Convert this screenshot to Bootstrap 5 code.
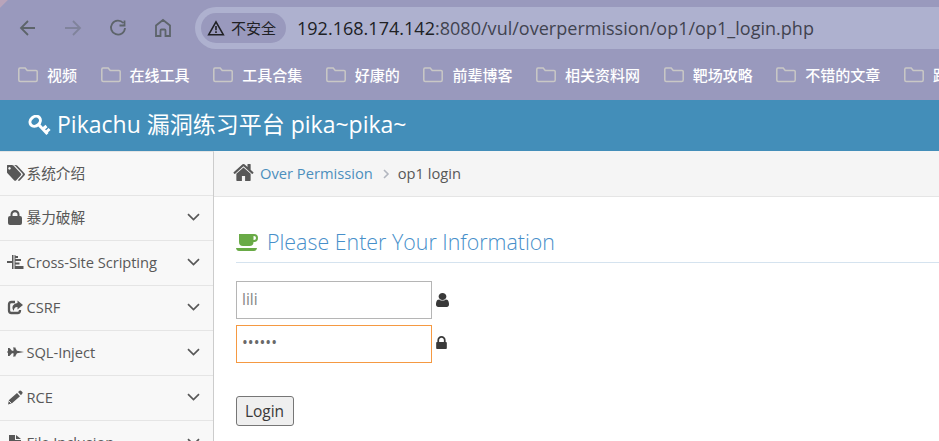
<!DOCTYPE html>
<html lang="zh-CN">
<head>
<meta charset="utf-8">
<title>Pikachu</title>
<link href="https://cdn.jsdelivr.net/npm/bootstrap@5.3.0/dist/css/bootstrap.min.css" rel="stylesheet">
<style>
body{font-family:"Open Sans","Noto Sans CJK SC",sans-serif;font-size:15px;line-height:20px;color:#585858;height:441px;overflow:hidden;background:#fff}
svg{display:block;flex:none;fill:currentColor}
.chrome{height:100px;background:linear-gradient(135deg,#b9a4ba 0,#b9a4ba 5px,#9999bd 6px);color:#fff}
.toolbar{height:56px;padding-left:19px}
.toolbar>svg{fill:none;stroke:#5d646a;stroke-width:1.8;margin-right:27px}
.address{height:42px;border-radius:21px 0 0 21px;background:#aeb1cf;padding-left:6px;margin-left:-4px}
.safety{height:30px;width:85px;border-radius:15px;background:#9999bd;color:#202124;font-family:"Noto Sans CJK SC",sans-serif;padding-left:6px;gap:6px}
.url{color:#41434f;font-family:"Open Sans",sans-serif;font-size:18px;line-height:24px;margin-left:11px;white-space:nowrap;letter-spacing:.02px}
.url b{font-weight:400;color:#202124}
.marks{height:38px;padding:0 0 0 18px;gap:23.6px;white-space:nowrap;font-family:"Noto Sans CJK SC",sans-serif;font-weight:500}
.mark-item{gap:9px;flex:none}
.marks svg{fill:none;stroke:#c9c8c6;stroke-width:1.5}
.titlebar{height:51px;background:#438eb9;color:#fff;font-size:23px;padding-left:28px;line-height:46px}
.titlebar span{margin-left:6px;padding-bottom:3px}
.side{width:214px;background:#f8f8f8;border-right:1px solid #ccc;border-top:1px solid #e5e5e5;font-size:14.7px;letter-spacing:-.06px}
.side-item{height:45px;border-bottom:1px solid #e5e5e5;padding:0 13px 2px 7px;white-space:nowrap;flex:none}
.side-item:first-child{height:44px}
.side-item .pic{width:19.5px;flex:none}
.crumbs{height:46px;background:#f5f5f5;border-bottom:1px solid #e5e5e5;padding:0 0 2px 19px;font-size:14.7px}
.blue{color:#4c8fbd}
.content-pad{padding:31px 0 0 22px}
.heading{height:35px;border-bottom:1px solid #d5e3ef;color:#478fca;font-size:21.4px;font-weight:300;padding-bottom:6px}
.field{width:196px;height:38px;border:1px solid #b5b5b5;border-radius:0;padding:0 5px 2px;color:#858585;font-size:15.5px;outline:0}
.field.hot{border-color:#f59942;color:#696969;padding-bottom:4px}
.login-btn{width:58px;height:30px;border:1px solid #767676;border-radius:3px;background:#efefef;color:#393939;font-size:15.5px;padding:0 1px 0 0;line-height:26px;margin-top:33px}
</style>
<script src="https://cdn.jsdelivr.net/npm/bootstrap@5.3.0/dist/js/bootstrap.bundle.min.js"></script>
</head>
<body>
<svg width="0" height="0" class="position-absolute">
<symbol id="folder" viewBox="0 0 20 16"><path d="M.8 13V2.2Q.8 1 2 1h5.2l2 2.4H18q1.2 0 1.2 1.2V13q0 1.5-1.500 1.500H2.300Q.8 14.500.8 13z"/></symbol>
<symbol id="down" viewBox="0 0 13 8"><path d="M1 1.200l5.500 5.300L12 1.200" fill="none" stroke="currentColor" stroke-width="1.700"/></symbol>
<symbol id="lock" viewBox="320 128 1152 1408"><path d="M640 768h512v-192q0-106-75-181t-181-75-181 75-75 181v192zm832 96v576q0 40-28 68t-68 28h-960q-40 0-68-28t-28-68v-576q0-40 28-68t68-28h32v-192q0-184 132-316t316-132 316 132 132 316v192h32q40 0 68 28t28 68z"/></symbol>
</svg>
<header class="chrome">
  <div class="toolbar d-flex align-items-center">
    <svg width="18" height="18" viewBox="0 0 18 18"><path d="M16 9H2M9 2L2 9l7 7"/></svg>
    <svg width="18" height="18" viewBox="0 0 18 18" opacity=".4"><path d="M1 9h14M9 2l7 7-7 7"/></svg>
    <svg width="18" height="18" viewBox="0 0 18 18"><path d="M14.300 4A7 7 0 1 0 16 9M15.500 1.500v5h-5"/></svg>
    <svg width="18" height="20" viewBox="0 0 18 20"><path d="M2 18V7.500L9 2l7 5.500V18h-4.500v-5.500q0-1-1-1h-3q-1 0-1 1V18z"/></svg>
    <div class="address d-flex align-items-center flex-fill">
      <div class="safety d-flex align-items-center flex-shrink-0">
        <svg width="18" height="16" viewBox="0 0 18 16"><path d="M9 1.800L16.300 14.700H1.700zM9 6v4.300M9 11.300v1.700" fill="none" stroke="#202124" stroke-width="1.600"/></svg><span>不安全</span>
      </div>
      <div class="url"><b>192.168.174.142</b>:8080/vul/overpermission/op1/op1_login.php</div>
    </div>
  </div>
  <nav class="marks d-flex align-items-center overflow-hidden">
    <div class="mark-item d-flex align-items-center"><svg width="20" height="16"><use href="#folder"/></svg><span>视频</span></div>
    <div class="mark-item d-flex align-items-center"><svg width="20" height="16"><use href="#folder"/></svg><span>在线工具</span></div>
    <div class="mark-item d-flex align-items-center"><svg width="20" height="16"><use href="#folder"/></svg><span>工具合集</span></div>
    <div class="mark-item d-flex align-items-center"><svg width="20" height="16"><use href="#folder"/></svg><span>好康的</span></div>
    <div class="mark-item d-flex align-items-center"><svg width="20" height="16"><use href="#folder"/></svg><span>前辈博客</span></div>
    <div class="mark-item d-flex align-items-center"><svg width="20" height="16"><use href="#folder"/></svg><span>相关资料网</span></div>
    <div class="mark-item d-flex align-items-center"><svg width="20" height="16"><use href="#folder"/></svg><span>靶场攻略</span></div>
    <div class="mark-item d-flex align-items-center"><svg width="20" height="16"><use href="#folder"/></svg><span>不错的文章</span></div>
    <div class="mark-item d-flex align-items-center"><svg width="20" height="16"><use href="#folder"/></svg><span>跟</span></div>
  </nav>
</header>
<div class="titlebar d-flex align-items-center">
  <svg width="23" height="22" viewBox="0 0 23 22"><g fill="none" stroke="#fff"><ellipse cx="7.200" cy="6.300" rx="4.600" ry="5.600" transform="rotate(48 7.200 6.300)" stroke-width="3"/><path d="M10.500 9.500l9 9.500" stroke-width="3"/><path d="M15 14l3.500-3M17.800 17.500l3.800-3.500" stroke-width="3"/></g></svg>
  <span class="text-nowrap">Pikachu 漏洞练习平台 pika~pika~</span>
</div>
<div class="d-flex" style="height:290px">
  <aside class="side d-flex flex-column flex-shrink-0 overflow-hidden">
    <div class="side-item d-flex align-items-center"><span class="pic"><svg width="18" height="16" viewBox="0 128 1835 1536" preserveAspectRatio="none"><path d="M384 448q0-53-37.500-90.500t-90.500-37.500-90.500 37.500-37.500 90.500 37.500 90.500 90.500 37.500 90.500-37.500 37.500-90.500zm1067 576q0 53-37 90l-491 492q-39 37-91 37-53 0-90-37l-715-716q-38-37-64.500-101t-26.500-117v-416q0-52 38-90t90-38h416q53 0 117 26.500t102 64.500l715 714q37 39 37 91zm384 0q0 53-37 90l-491 492q-39 37-91 37-36 0-59-14t-53-45l470-470q37-37 37-90 0-52-37-91l-715-714q-38-38-102-64.500t-117-26.500h224q53 0 117 26.500t102 64.500l715 714q37 39 37 91z"/></svg></span><span>系统介绍</span></div>
    <div class="side-item d-flex align-items-center"><span class="pic"><svg width="16" height="15" viewBox="0 0 16 15"><path d="M1 8q0-2 2-2h10q2 0 2 2v5q0 2-2 2H3q-2 0-2-2zM3.500 7V4.500a4.500 4.500 0 0 1 9 0V7h-2V4.700a2.500 2.500 0 0 0-5 0V7z"/></svg></span><span>暴力破解</span><svg class="ms-auto" width="13" height="8"><use href="#down"/></svg></div>
    <div class="side-item d-flex align-items-center"><span class="pic"><svg width="17" height="14" viewBox="0 0 17 14"><path d="M0 6h5v2H0zM5 0h1.500v14H5zM8 1h3v2H8zM8 4h6v2H8zM8 7.500h4.500v2H8zM8 11h8.500v3H8zM7.500 0h1v14h-1z"/></svg></span><span>Cross-Site Scripting</span><svg class="ms-auto" width="13" height="8"><use href="#down"/></svg></div>
    <div class="side-item d-flex align-items-center"><span class="pic"><svg width="17" height="15" viewBox="0 0 17 15"><path d="M8 2H4.500Q2 2 2 4.500v6Q2 13 4.500 13h6q2.500 0 2.500-2.500V10" fill="none" stroke="currentColor" stroke-width="2.300"/><path d="M10.500.5L16 5l-5.500 4.500V7Q7 6.700 6.800 11 4.500 8 6 5.500 7.500 3 10.500 3z"/></svg></span><span>CSRF</span><svg class="ms-auto" width="13" height="8"><use href="#down"/></svg></div>
    <div class="side-item d-flex align-items-center"><span class="pic"><svg width="17" height="12" viewBox="0 0 17 12"><path d="M1 2h1.500L5 4.800h1.500V2.300H6v-.8h2.500v.8L10 4.800l3 .4L17 6l-4 .8-3 .4-1.500 2.500v.8H6v-.8h.5V7.200H5L2.500 10H1V7H.5V5H1z"/></svg></span><span>SQL-Inject</span><svg class="ms-auto" width="13" height="8"><use href="#down"/></svg></div>
    <div class="side-item d-flex align-items-center"><span class="pic"><svg width="16" height="15" viewBox="0 0 16 15"><path d="M1 14.500l1-4.500 8-7 3 3.200-8 7zM11 2l1.500-1.300Q13.500 0 14.300.9l1 1q.8.900-.2 1.800L14 5.200z"/><path d="M2 11l2.500 2.500" stroke="#f8f8f8" stroke-width=".9"/></svg></span><span>RCE</span><svg class="ms-auto" width="13" height="8"><use href="#down"/></svg></div>
    <div class="side-item d-flex align-items-center"><span class="pic"><svg width="15" height="16" viewBox="0 0 15 16"><path d="M2 1h6v5h6v9q0 1-1 1H3q-1 0-1-1zM9 1l5 4H9z"/></svg></span><span>File Inclusion</span><svg class="ms-auto" width="13" height="8"><use href="#down"/></svg></div>
  </aside>
  <main class="flex-fill">
    <div class="crumbs d-flex align-items-center">
      <svg width="21" height="17" viewBox="50 253 1692 1283" preserveAspectRatio="none"><path d="M1472 992v480q0 26-19 45t-45 19h-384v-384h-256v384h-384q-26 0-45-19t-19-45v-480q0-1 .5-3t.5-3l575-474 575 474q1 2 1 6zm223-69l-62 74q-8 9-21 11h-3q-13 0-21-7l-692-577-692 577q-12 8-24 7-13-2-21-11l-62-74q-8-10-7-23.500t11-21.500l719-599q32-26 76-26t76 26l244 204v-195q0-14 9-23t23-9h192q14 0 23 9t9 23v408l219 182q10 8 11 21.500t-7 23.500z"/></svg>
      <span class="blue" style="margin-left:6px">Over Permission</span>
      <svg width="7" height="10" viewBox="0 0 7 10" style="margin:2px 8px 0 10px"><path d="M1 1l4 4-4 4" fill="none" stroke="#b2b6bf" stroke-width="1.600"/></svg>
      <span>op1 login</span>
    </div>
    <div class="content-pad">
      <div class="heading d-flex align-items-center"><svg width="23" height="17" viewBox="0 0 23 17" style="fill:#69aa46"><path d="M3 0h15q4 0 4 4t-4 4h-.5q0 4-4 4H7q-4 0-4-4zm14.500 2v4H18q2 0 2-2t-2-2zM0 14h21q-.5 3-3 3H3q-2.500 0-3-3z"/></svg><span class="ms-2">Please Enter Your Information</span></div>
      <form>
        <div class="d-flex align-items-center" style="margin-top:18px"><input class="field" type="text" value="lili"><svg style="margin-left:4px;color:#393939" width="13" height="14" viewBox="256 128 1280 1536" preserveAspectRatio="none"><path d="M1536 1399q0 109-62.500 187t-150.500 78h-854q-88 0-150.500-78t-62.500-187q0-85 8.500-160.500t31.500-152 58.500-131 94-89 134.500-34.500q131 128 313 128t313-128q76 0 134.500 34.500t94 89 58.500 131 31.500 152 8.500 160.500zm-256-887q0 159-112.500 271.500t-271.500 112.500-271.500-112.500-112.500-271.500 112.500-271.500 271.500-112.500 271.500 112.500 112.500 271.500z"/></svg></div>
        <div class="d-flex align-items-center" style="margin-top:6px"><div class="field hot d-flex align-items-center">••••••</div><svg style="margin:0 0 4px 4px;color:#393939" width="11" height="13"><use href="#lock"/></svg></div>
        <button class="login-btn" type="button">Login</button>
      </form>
    </div>
  </main>
</div>
</body>
</html>
